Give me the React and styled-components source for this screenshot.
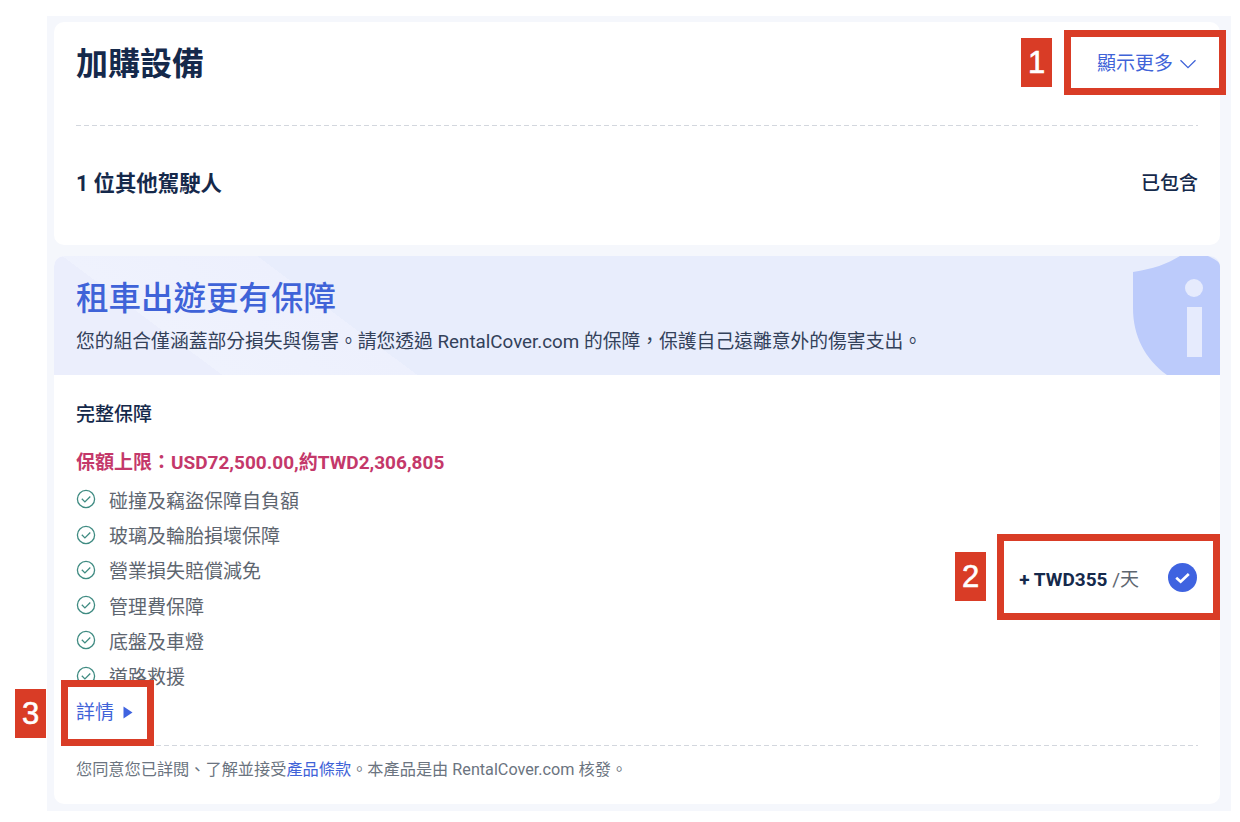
import React from "react";
import styled, { createGlobalStyle } from "styled-components";

const GlobalStyle = createGlobalStyle`
  html, body {
    margin: 0;
    padding: 0;
    background: #fff;
    font-family: Roboto, "Noto Sans CJK TC", sans-serif;
    color: #15294b;
  }
`;

const coverItems = [
  "碰撞及竊盜保障自負額",
  "玻璃及輪胎損壞保障",
  "營業損失賠償減免",
  "管理費保障",
  "底盤及車燈",
  "道路救援",
];

const CheckIcon = () => (
  <svg width="20" height="20" viewBox="0 0 20 20" fill="none">
    <circle cx="10" cy="10" r="8.6" stroke="#3f8b82" strokeWidth="1.3" />
    <path d="M5.8 9.8l3.1 3.1 5.4-5.4" stroke="#3f8b82" strokeWidth="1.3" />
  </svg>
);

function App() {
  return (
    <Page>
      <GlobalStyle />
      <Panel>
        <ExtrasCard>
          <CardHead>
            <Title>加購設備</Title>
            <ShowMore>
              顯示更多
              <svg width="18" height="10" viewBox="0 0 18 10" fill="none">
                <path d="M1.5 1.2l7.5 7.5 7.5-7.5" stroke="#3f63d8" strokeWidth="1.3" />
              </svg>
            </ShowMore>
          </CardHead>
          <DriverRow>
            <DriverName>1 位其他駕駛人</DriverName>
            <Included>已包含</Included>
          </DriverRow>
        </ExtrasCard>

        <CoverCard>
          <Banner>
            <BannerTitle>租車出遊更有保障</BannerTitle>
            <BannerText>
              您的組合僅涵蓋部分損失與傷害。請您透過 RentalCover.com 的保障，保護自己遠離意外的傷害支出。
            </BannerText>
            <Shield width="87" height="119" viewBox="0 0 87 119">
              <path
                d="M0 16C20 13 34 8 47 0H75C79 2 84 4 87 8V119H34C12 103 0 80 0 52Z"
                fill="#bccbfb"
              />
              <circle cx="61" cy="32" r="9" fill="#e6ebfd" />
              <rect x="54" y="51" width="15" height="50" fill="#e6ebfd" />
            </Shield>
          </Banner>

          <CoverBody>
            <CoverInfo>
              <PlanName>完整保障</PlanName>
              <Limit>保額上限：USD72,500.00,約TWD2,306,805</Limit>
              <CoverList>
                {coverItems.map((item) => (
                  <CoverItem key={item}>
                    <CheckIcon />
                    {item}
                  </CoverItem>
                ))}
              </CoverList>
              <Details>
                詳情
                <svg width="10" height="13" viewBox="0 0 10 13">
                  <path d="M0.5 0.5L9.5 6.5L0.5 12.5Z" fill="#3f63e0" />
                </svg>
              </Details>
            </CoverInfo>
            <Price>
              <PriceText>
                <strong>+ TWD355</strong> /天
              </PriceText>
              <svg width="29" height="29" viewBox="0 0 30 30">
                <circle cx="15" cy="15" r="15" fill="#3f63e0" />
                <path d="M8.5 15.3l4.6 4 8.4-7.8" fill="none" stroke="#fff" strokeWidth="2.8" />
              </svg>
            </Price>
          </CoverBody>

          <Terms>
            您同意您已詳閱、了解並接受<TermsLink>產品條款</TermsLink>。本產品是由 RentalCover.com 核發。
          </Terms>
        </CoverCard>
      </Panel>

      <MarkBox $left={1064} $top={30} $width={162} $height={65} />
      <MarkNumber $left={1021} $top={38}>1</MarkNumber>
      <MarkBox $left={997} $top={534} $width={223} $height={86} />
      <MarkNumber $left={955} $top={552}>2</MarkNumber>
      <MarkBox $left={61} $top={680} $width={93} $height={66} />
      <MarkNumber $left={15} $top={689}>3</MarkNumber>
    </Page>
  );
}

const Page = styled.div`
  position: relative;
  width: 1240px;
  height: 822px;
  overflow: hidden;
  padding-top: 16px;
  box-sizing: border-box;
`;

const Panel = styled.div`
  width: 1184px;
  height: 795px;
  margin-left: 47px;
  padding: 6px 11px 0 7px;
  box-sizing: border-box;
  background: #f5f7fc;
  display: flex;
  flex-direction: column;
  gap: 11px;
`;

const Card = styled.section`
  background: #fff;
  border-radius: 10px;
  overflow: hidden;
`;

const dashedBottom = `
  background-image: repeating-linear-gradient(90deg, #d3d7de 0 5px, transparent 5px 8px);
  background-size: 100% 1px;
  background-position: bottom;
  background-repeat: no-repeat;
`;

const ExtrasCard = styled(Card)`
  height: 223px;
  padding: 0 22px;
`;

const CardHead = styled.div`
  height: 104px;
  display: flex;
  justify-content: space-between;
  align-items: flex-start;
  ${dashedBottom}
`;

const Title = styled.h2`
  margin: 20px 0 0;
  font-size: 32px;
  line-height: 44px;
  font-weight: 700;
`;

const ShowMore = styled.button`
  margin: 29px 1px 0 0;
  padding: 0;
  border: 0;
  background: none;
  font: inherit;
  font-size: 19px;
  line-height: 26px;
  color: #3f63d8;
  display: flex;
  align-items: center;
  gap: 6px;
`;

const DriverRow = styled.div`
  display: flex;
  justify-content: space-between;
  align-items: center;
  height: 110px;
`;

const DriverName = styled.div`
  font-size: 21.4px;
  font-weight: 700;
`;

const Included = styled.div`
  font-size: 19px;
  font-weight: 500;
`;

const CoverCard = styled(Card)`
  height: 548px;
`;

const Banner = styled.div`
  position: relative;
  height: 119px;
  padding: 21px 22px 0;
  box-sizing: border-box;
  background: linear-gradient(
    36.6deg,
    #ebeefc 0 12.7%,
    #eff2fd 12.7%,
    #edf0fd 27.4%,
    #e8edfc 27.4% 100%
  );
`;

const BannerTitle = styled.h2`
  margin: 0;
  font-size: 32.5px;
  line-height: 44px;
  font-weight: 500;
  color: #3f63d8;
`;

const BannerText = styled.p`
  margin: 8px 0 0;
  font-size: 18.8px;
  line-height: 26px;
  color: #33415a;
`;

const Shield = styled.svg`
  position: absolute;
  top: 0;
  right: 0;
`;

const CoverBody = styled.div`
  display: flex;
  justify-content: space-between;
  align-items: flex-start;
  height: 371px;
  margin: 0 22px;
  ${dashedBottom}
`;

const CoverInfo = styled.div`
  padding-top: 28px;
`;

const PlanName = styled.div`
  font-size: 19px;
  line-height: 24px;
  font-weight: 500;
`;

const Limit = styled.div`
  margin-top: 24px;
  font-size: 19px;
  line-height: 24px;
  font-weight: 700;
  color: #c4386a;
`;

const CoverList = styled.ul`
  list-style: none;
  margin: 6.6px 0 0;
  padding: 0;
`;

const CoverItem = styled.li`
  height: 35.3px;
  display: flex;
  align-items: center;
  gap: 13px;
  font-size: 19px;
  color: #5e6670;
`;

const Details = styled.a`
  display: flex;
  align-items: center;
  gap: 9px;
  margin-top: 1.4px;
  font-size: 19px;
  line-height: 36px;
  color: #3f63d8;
`;

const Price = styled.div`
  display: flex;
  align-items: center;
  gap: 29px;
  margin: 188px 1px 0 0;
`;

const PriceText = styled.div`
  font-size: 19px;
  color: #5e6670;
  strong {
    font-weight: 700;
    color: #15294b;
  }
`;

const Terms = styled.p`
  margin: 12px 22px 0;
  font-size: 16.2px;
  line-height: 24px;
  color: #6b7480;
`;

const TermsLink = styled.a`
  color: #3f63d8;
`;

const MarkBox = styled.div`
  position: absolute;
  left: ${(p) => p.$left}px;
  top: ${(p) => p.$top}px;
  width: ${(p) => p.$width}px;
  height: ${(p) => p.$height}px;
  box-sizing: border-box;
  border: 7px solid #d93c26;
`;

const MarkNumber = styled.div`
  position: absolute;
  left: ${(p) => p.$left}px;
  top: ${(p) => p.$top}px;
  width: 31px;
  height: 49px;
  background: #d93c26;
  color: #fff;
  font-family: "Liberation Sans", sans-serif;
  font-size: 31px;
  line-height: 49px;
  text-align: center;
  -webkit-text-stroke: 0.6px #fff;
`;

export default App;
